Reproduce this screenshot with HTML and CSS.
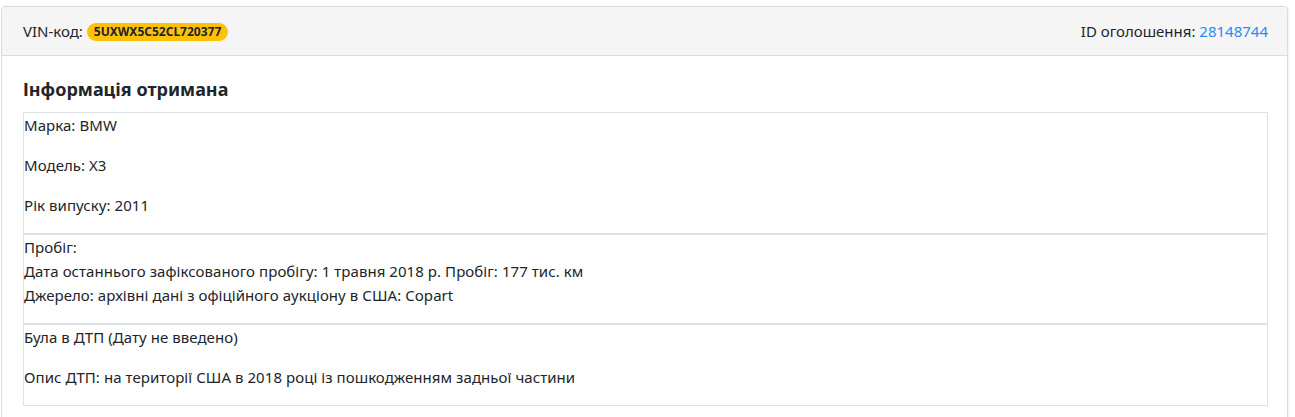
FILE: index.html
```html
<!DOCTYPE html>
<html lang="uk">
<head>
<meta charset="utf-8">
<title>VIN</title>
<link rel="stylesheet" href="styles.css">
</head>
<body>
<div class="card">
  <div class="card-header">
    <div class="vin">VIN-код: <span class="badge">5UXWX5C52CL720377</span></div>
    <div class="ad-id">ID оголошення: <a href="#" class="link">28148744</a></div>
  </div>
  <div class="card-body">
    <h3 class="title">Інформація отримана</h3>
    <div class="rows">
      <div class="row">
        <p>Марка: BMW</p>
        <p>Модель: X3</p>
        <p>Рік випуску: 2011</p>
      </div>
      <div class="row">
        <p>Пробіг:<br>Дата останнього зафіксованого пробігу: 1 травня 2018 р. Пробіг: 177 тис. км<br>Джерело: архівні дані з офіційного аукціону в США: Copart</p>
      </div>
      <div class="row">
        <p>Була в ДТП (Дату не введено)</p>
        <p>Опис ДТП: на території США в 2018 році із пошкодженням задньої частини</p>
      </div>
    </div>
  </div>
</div>
</body>
</html>
```
FILE: styles.css
```css
html, body {
  margin: 0;
  padding: 0;
  background: #fff;
}
body {
  font-family: "Noto Sans", "Open Sans", sans-serif;
  font-size: 15px;
  color: #212529;
  padding: 6px 7px 0 1px;
}
.card {
  border: 1px solid #dcdcdc;
  border-radius: 4px;
  background: #fff;
  box-shadow: 1px 0 2px rgba(0,0,0,0.06);
}
.card-header {
  display: flex;
  justify-content: space-between;
  align-items: center;
  height: 48px;
  padding: 0 19px 0 21px;
  background: #f5f5f5;
  border-bottom: 1px solid #dcdcdc;
  border-radius: 4px 4px 0 0;
}
.badge {
  display: inline-block;
  background: #ffc107;
  color: #212529;
  font-size: 12px;
  font-weight: 700;
  line-height: 18px;
  padding: 0 7px;
  border-radius: 9px;
  vertical-align: 1px;
}
.link {
  color: #2a8bf2;
  text-decoration: none;
}
.card-body {
  padding: 20px 19px 30px 21px;
}
.title {
  margin: 0 0 9px;
  font-size: 18px;
  font-weight: 700;
  line-height: 27px;
}
.row {
  border: 1px solid #dee2e6;
}
.row p {
  margin: 0 0 16px;
  line-height: 24px;
  letter-spacing: 0.06px;
}
```
